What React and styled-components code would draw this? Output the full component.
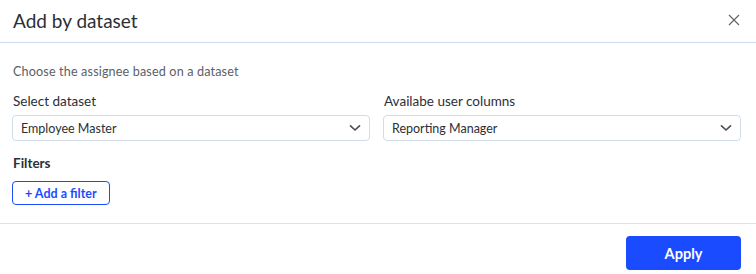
import styled, { createGlobalStyle } from "styled-components"

const Global = createGlobalStyle`
  body {
    margin: 0;
    background: #ffffff;
    font-family: Lato, "Open Sans", sans-serif;
    color: #2b2f36;
  }
`

const Modal = styled.div`
  width: 756px;
  height: 274px;
  background: #fff;
  display: flex;
  flex-direction: column;
`

const Header = styled.header`
  height: 43px;
  box-sizing: border-box;
  border-bottom: 1px solid #cfdcef;
  display: flex;
  align-items: center;
  justify-content: space-between;
  padding: 0 16px 2px 13px;
`

const Title = styled.h2`
  margin: 0;
  font-size: 19px;
  font-weight: 400;
  color: #2b2f36;
`

const Close = styled.button`
  border: none;
  background: none;
  padding: 0;
  width: 12px;
  height: 12px;
  display: flex;
  cursor: pointer;
`

const Body = styled.section`
  padding: 21px 14px 0 12px;
  flex: 1;
  border-bottom: 1px solid #dde2e8;
`

const Hint = styled.p`
  margin: 0 0 14px 1px;
  font-size: 12.6px;
  letter-spacing: 0.15px;
  color: #5b6068;
`

const Row = styled.div`
  display: grid;
  grid-template-columns: 358px 358px;
  column-gap: 13px;
`

const Field = styled.div`
  display: flex;
  flex-direction: column;
`

const Label = styled.label`
  font-size: 13.5px;
  font-weight: ${(p) => (p.$strong ? 700 : 400)};
  color: #2b2f36;
  margin-left: 1px;
  margin-bottom: 6px;
  line-height: 16px;
`

const Select = styled.div`
  height: 26px;
  box-sizing: border-box;
  border: 1px solid #d3dcea;
  border-radius: 4px;
  display: flex;
  align-items: center;
  justify-content: space-between;
  padding: 0 8px 0 8px;
  font-size: 12.5px;
  color: #2b2f36;
`

const Filters = styled.div`
  margin-top: 14px;
  display: flex;
  flex-direction: column;
  align-items: flex-start;
`

const Outline = styled.button`
  height: 24px;
  padding: 0 12px;
  border: 1px solid #1d4cff;
  border-radius: 4px;
  background: #fff;
  color: #1d4cff;
  font-family: inherit;
  font-weight: 700;
  font-size: 12.5px;
  margin-top: 4px;
`

const Footer = styled.footer`
  height: 50px;
  display: flex;
  justify-content: flex-end;
  align-items: flex-start;
  padding: 12px 15px 0 0;
  box-sizing: border-box;
`

const Primary = styled.button`
  width: 115px;
  height: 34px;
  border: none;
  border-radius: 4px;
  background: #1b4bff;
  color: #fff;
  font-family: inherit;
  font-weight: 700;
  font-size: 14.5px;
`

function Chevron() {
  return (
    <svg width="12" height="8" viewBox="0 0 12 8">
      <path d="M1.5 1.8 L6 6 L10.5 1.8" fill="none" stroke="#4a5059" strokeWidth="1.7" strokeLinecap="round" strokeLinejoin="round" />
    </svg>
  )
}

export default function App() {
  return (
    <Modal>
      <Global />
      <Header>
        <Title>Add by dataset</Title>
        <Close aria-label="Close">
          <svg width="12" height="12" viewBox="0 0 12 12">
            <path d="M1 1 L11 11 M11 1 L1 11" stroke="#60656e" strokeWidth="1.2" />
          </svg>
        </Close>
      </Header>
      <Body>
        <Hint>Choose the assignee based on a dataset</Hint>
        <Row>
          <Field>
            <Label>Select dataset</Label>
            <Select>
              Employee Master
              <Chevron />
            </Select>
          </Field>
          <Field>
            <Label>Availabe user columns</Label>
            <Select>
              Reporting Manager
              <Chevron />
            </Select>
          </Field>
        </Row>
        <Filters>
          <Label $strong>Filters</Label>
          <Outline>+ Add a filter</Outline>
        </Filters>
      </Body>
      <Footer>
        <Primary>Apply</Primary>
      </Footer>
    </Modal>
  )
}
